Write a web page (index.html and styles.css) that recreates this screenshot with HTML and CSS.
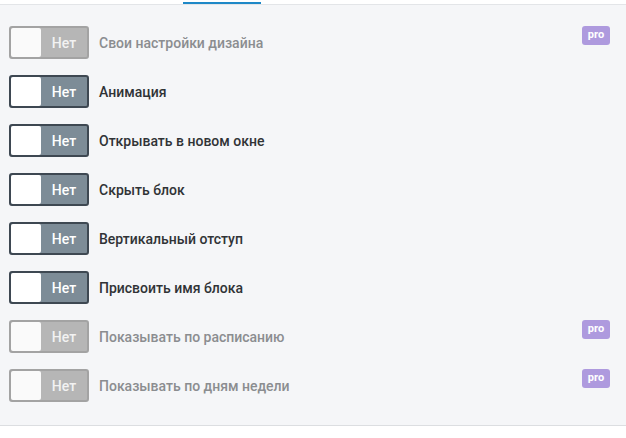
FILE: index.html
```html
<!DOCTYPE html>
<html lang="ru">
<head>
    <meta charset="UTF-8">
    <meta name="viewport" content="width=device-width, initial-scale=1.0">
    <title>Настройки блока</title>
    <link rel="stylesheet" href="styles.css">
</head>
<body>
    <div class="tabs">
        <div class="tab"></div>
        <div class="tab active"></div>
    </div>
    <div class="options">
        <div class="row disabled">
            <div class="toggle"><span class="knob"></span><span class="state">Нет</span></div>
            <div class="label">Свои настройки дизайна</div>
            <div class="pro">pro</div>
        </div>
        <div class="row">
            <div class="toggle"><span class="knob"></span><span class="state">Нет</span></div>
            <div class="label">Анимация</div>
        </div>
        <div class="row">
            <div class="toggle"><span class="knob"></span><span class="state">Нет</span></div>
            <div class="label">Открывать в новом окне</div>
        </div>
        <div class="row">
            <div class="toggle"><span class="knob"></span><span class="state">Нет</span></div>
            <div class="label">Скрыть блок</div>
        </div>
        <div class="row">
            <div class="toggle"><span class="knob"></span><span class="state">Нет</span></div>
            <div class="label">Вертикальный отступ</div>
        </div>
        <div class="row">
            <div class="toggle"><span class="knob"></span><span class="state">Нет</span></div>
            <div class="label">Присвоить имя блока</div>
        </div>
        <div class="row disabled">
            <div class="toggle"><span class="knob"></span><span class="state">Нет</span></div>
            <div class="label">Показывать по расписанию</div>
            <div class="pro">pro</div>
        </div>
        <div class="row disabled">
            <div class="toggle"><span class="knob"></span><span class="state">Нет</span></div>
            <div class="label">Показывать по дням недели</div>
            <div class="pro">pro</div>
        </div>
    </div>
    <div class="footer"></div>
</body>
</html>
```

FILE: styles.css
```css
body {
    margin: 0;
    font-family: Roboto, 'Liberation Sans', sans-serif;
    background-color: #fff;
}

.tabs {
    display: flex;
    height: 5px;
    background-color: #fff;
    border-bottom: 1px solid #e3e5e8;
    box-sizing: border-box;
}

.tab {
    width: 78px;
}

.tab:first-child {
    width: 183px;
}

.tab.active {
    border-bottom: 2px solid #1e88c7;
}

.options {
    background-color: #f5f6f8;
    padding: 21px 16px 23px 9px;
    display: flex;
    flex-direction: column;
    gap: 16px;
    border-bottom: 1px solid #dcdee1;
}

.row {
    display: flex;
    align-items: flex-start;
    height: 33px;
}

.toggle {
    display: flex;
    width: 80px;
    height: 33px;
    box-sizing: border-box;
    border: 2px solid #3e4852;
    border-radius: 3px;
    background-color: #7d8c97;
    overflow: hidden;
}

.knob {
    width: 30px;
    height: 100%;
    background-color: #fff;
    border-radius: 2px;
}

.state {
    flex: 1;
    display: flex;
    align-items: center;
    justify-content: center;
    padding-top: 1px;
    color: #fff;
    font-size: 14px;
    font-weight: 500;
}

.label {
    margin-left: 10px;
    flex: 1;
    padding-top: 1px;
    line-height: 33px;
    font-size: 14px;
    font-weight: 500;
    color: #303336;
}

.pro {
    width: 28px;
    height: 19px;
    line-height: 18px;
    text-align: center;
    border-radius: 3px;
    background-color: #ae9ade;
    color: #fff;
    font-size: 11px;
    font-weight: 700;
}

.row.disabled .toggle {
    border-color: #a3a3a3;
    background-color: #b6b6b6;
}

.row.disabled .knob {
    background-color: #fafafa;
}

.row.disabled .state {
    color: #f2f2f2;
}

.row.disabled .label {
    color: #8b8d90;
}

.footer {
    height: 12px;
    background-color: #fff;
}
```
